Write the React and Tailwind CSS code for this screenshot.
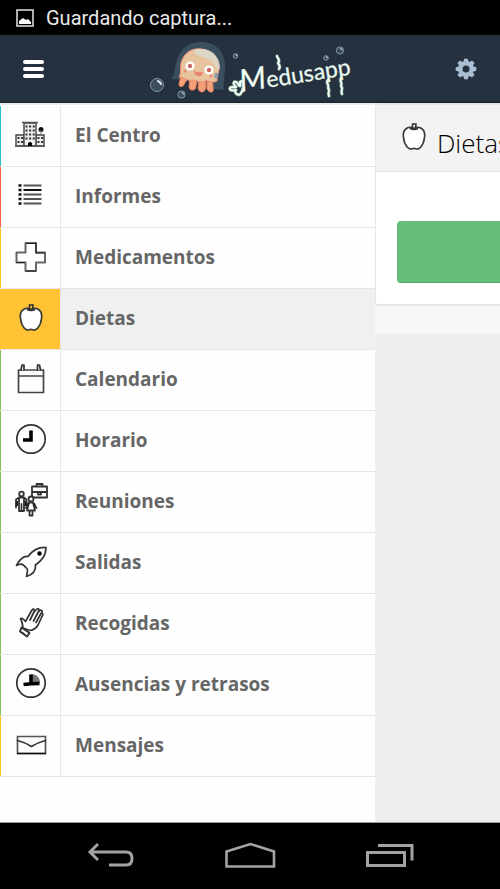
import React from "react";

const ink = { fill: "none", stroke: "#333", strokeWidth: 1.7, strokeLinejoin: "round", strokeLinecap: "round" };

function Icon({ children }) {
  return (
    <svg viewBox="1 0 60 60" className="block h-[60px] w-[60px]" aria-hidden="true">
      {children}
    </svg>
  );
}

const Building = () => (
  <Icon>
    <g fill="#eee" stroke="#444" strokeWidth="1.4">
      <path d="M16 29h8v11h-8zM36 29h8v11h-8z" />
      <path d="M24 17h12v23H24z" />
    </g>
    <path d="M22 16.500h16M15 40h30" stroke="#555" strokeWidth="1.600" />
    <path
      d="M25.500 20.500h10M25.500 24.500h10M25.500 28.500h10M25.500 32.500h10M17.500 32h6M17.500 36h6M37.500 32h6M37.500 36h6"
      stroke="#333"
      strokeWidth="2"
      strokeDasharray="2 1.6"
    />
    <circle cx="41" cy="23.500" r="2.500" fill="#111" />
    <path d="M41 24v6" stroke="#777" />
    <path d="M28 40v-3q2-2 4 0v3z" fill="#000" />
  </Icon>
);

const ListIcon = () => (
  <Icon>
    <g stroke="#555" strokeWidth="2">
      <path d="M23.500 18.500h18M23.500 27.500h18M23.500 32h18M23.500 36.500h18" />
      <path d="M23.500 23h18" stroke="#111" />
    </g>
    <path d="M18.500 18.500h3M18.500 23h3M18.500 27.500h3M18.500 32h3M18.500 36.500h3" stroke="#111" strokeWidth="2.400" />
  </Icon>
);

const Cross = () => (
  <Icon>
    <path d="M25.500 15h10.500v9.500h9v10h-9V43H25.500v-8.500h-9v-10h9z" {...ink} stroke="#666" strokeWidth="2" />
    <path d="M26 15.500h10v9.500H45M26 43h10M16.500 34.500h8.500" fill="none" stroke="#222" strokeWidth="1.200" />
  </Icon>
);

const Apple = () => (
  <Icon>
    <path
      d="M31 20.500c-3-1.500-6-1.500-8.200.500-2.500 2-2.800 5-2.300 8.500.400 3.500 1.500 7 3.700 9.500 1.800 2 3.500 2.500 5 1.800q1.800-.800 3.600 0c1.500.700 3.200.200 5-1.800 2.200-2.500 3.300-6 3.700-9.500.500-3.500.200-6.500-2.300-8.500-2.200-2-5.200-2-8.200-.500z"
      fill="#fff"
      stroke="#3a3a3a"
      strokeWidth="1.700"
    />
    <path d="M29.500 20.500v-4.500h3.500l-.500 4.500M27 20.500q4 2 8 0" fill="none" stroke="#333" strokeWidth="1.600" />
  </Icon>
);

const Calendar = () => (
  <Icon>
    <path d="M18.500 20h25v22.500h-25zM18.500 26h25" {...ink} stroke="#444" />
    <path d="M21 20l1-5h2v5M37.500 20v-5h2l1 5" {...ink} fill="#fff" />
  </Icon>
);

const Clock = () => (
  <Icon>
    <circle cx="31" cy="28" r="14.200" {...ink} />
    <path d="M31 19.500v9.500h-8" fill="none" stroke="#000" strokeWidth="3.600" />
  </Icon>
);

const Meeting = () => (
  <Icon>
    <g {...ink} strokeWidth="1.800">
      <path d="M32 14.500h15v11h-15zM32 20h15M36.500 14.500v-2.500h6v2.500M38 20v2.500h3V20" fill="#fff" />
      <circle cx="21.500" cy="22" r="2.300" />
      <path d="M19 25.500h5l2.500 2v6M19 25.500l-3 2v8M19 27v12h5V27M21.500 32v7" />
      <circle cx="31" cy="27" r="2.500" fill="#fff" />
      <path d="M29 30.500l-3 5.500M33 30.500l3.500 5.500M29 30.500l-2 8h8l-2-8zM29.500 39v4.500h3V39" fill="#fff" />
    </g>
    <path d="M17 29v5M25.500 29v5M27 34l1-3M35 34l-1-3" stroke="#222" strokeWidth="2" />
  </Icon>
);

const Rocket = () => (
  <Icon>
    <path d="M46 14.500c-8-.500-13.500 3-18 9-4-.500-8 2-11.500 9 3.500-2 6-2 8 .500 1.500 2.500 3.500 2 3 5-.500 2-.500 3.500-1 5.500 6.500-2 9.500-6 9-11.500 6-4.500 10.500-9 10.500-17.500z" {...ink} />
    <circle cx="39.500" cy="20.500" r="2.200" fill="#000" />
  </Icon>
);

const Hand = () => (
  <Icon>
    <path d="M23 34c-.500-4-.500-6-2.500-9.500 2.500-1 3 1 5 3L32 16c2-2 3 0 2 2l3-3c2-1 2.500 1 1.500 2.500l2-1.500c2 0 2 1.500 1 3 2 0 1.500 2 .500 3.500l-4 8.500c-2 3.500-4 5-8 5.500z" {...ink} fill="#fff" />
    <path d="M34 18l-4 8M38.500 17.500l-5 9.500M41 19.500l-5 9" {...ink} />
    <path d="M21.500 33.500l8 5.500-2.500 3.500-7-5z" {...ink} strokeWidth="2" fill="#fff" />
    <path d="M22 38l3 2" stroke="#333" />
  </Icon>
);

const Absence = () => (
  <Icon>
    <circle cx="31" cy="28" r="14.200" {...ink} />
    <path d="M31 28v-9c6 0 9 4 9 9z" fill="#777" />
    <path d="M31 19.500v9M23.500 29.500q8-1 16-1" fill="none" stroke="#000" strokeWidth="3.600" />
  </Icon>
);

const Mail = () => (
  <Icon>
    <path d="M17.500 20.500h28v17H17.500z" {...ink} stroke="#555" strokeLinejoin="miter" />
    <path d="M17.500 24.500q8 2 14 6 6-4 14-6" {...ink} />
    <path d="M17 37.500h29" stroke="#111" strokeWidth="1.500" />
  </Icon>
);

const items = [
  { label: "El Centro", icon: Building, edge: "border-[#25c1c9]" },
  { label: "Informes", icon: ListIcon, edge: "border-[#ff5b45]" },
  { label: "Medicamentos", icon: Cross, edge: "border-[#ffc20e]" },
  { label: "Dietas", icon: Apple, edge: "border-[#ffc333]", active: true },
  { label: "Calendario", icon: Calendar, edge: "border-[#80c255]" },
  { label: "Horario", icon: Clock, edge: "border-[#80c255]" },
  { label: "Reuniones", icon: Meeting, edge: "border-[#80c255]" },
  { label: "Salidas", icon: Rocket, edge: "border-[#80c255]" },
  { label: "Recogidas", icon: Hand, edge: "border-[#80c255]" },
  { label: "Ausencias y retrasos", icon: Absence, edge: "border-[#80c255]" },
  { label: "Mensajes", icon: Mail, edge: "border-[#ffc20e]" },
];

function Bubble({ x, y, r }) {
  return (
    <g>
      <circle cx={x} cy={y} r={r} fill="#3a4d5b" stroke="#8497a2" strokeWidth="1" />
      <path d={`M${x} ${y - r * 0.6}Q${x + r * 0.6} ${y - r * 0.5} ${x + r * 0.6} ${y}`} fill="none" stroke="#dce5e9" strokeWidth={r > 4 ? 2 : 1} />
    </g>
  );
}

function Seaweed({ d }) {
  return (
    <>
      <path d={d} fill="none" stroke="#6f9c87" strokeWidth="3.400" strokeLinecap="round" strokeLinejoin="round" />
      <path d={d} fill="none" stroke="#f4fff8" strokeWidth="2" strokeLinecap="round" strokeLinejoin="round" />
    </>
  );
}

function Logo() {
  return (
    <svg viewBox="0 0 220 66" className="h-[66px] w-[220px]" role="img" aria-label="Medusapp">
      <Bubble x={17} y={49} r={6.5} />
      <Bubble x={41.5} y={58.5} r={3.6} />
      <Bubble x={95.5} y={20} r={2.3} />
      <Bubble x={186} y={22} r={2.3} />
      <Bubble x={200} y={14.5} r={3.6} />
      <path d="M31 43c4-5 3-10 6-19C40 13 49 6 60 6c14 0 24 7 25 23 0 10-2 16-1 25-8 0-15-3-23-5-9-2-19-6-30-6z" fill="#3a4f5d" />
      <path d="M41 40l-2 8q0 4 4 2l5-8zM50 42l-1 9q1 4 4 3 3 0 3-4l1-7zM59 43l-1 9q1 4 4 4t4-5l-1-8zM67 43v10q2 4 5 3 2-1 1-5l-1-9z" fill="#f4a078" stroke="#ef7f62" />
      <path d="M39 41c3-5 0-10 3-17 4-9 11-12 19-11 12 1 18 9 18 19 0 5-2 7-2 13-5 3-8-1-12 0-5 3-8-1-12-1-5 2-8-3-14-3z" fill="#e8c49e" stroke="#f08a70" />
      <path d="M56 13c13-2 23 5 24 18 0 3-2 4-4 1-2-7-8-10-17-12-6-2-7-6-3-7z" fill="#d8dbd0" opacity=".8" />
      <circle cx="50" cy="30" r="4.600" fill="#fff" />
      <circle cx="69" cy="34" r="4.600" fill="#fff" />
      <circle cx="50" cy="30" r="2.200" fill="#c86a5f" />
      <circle cx="69" cy="34" r="2.200" fill="#c86a5f" />
      <path d="M54 35q5 2 9 1-1 5-5 4-4-1-4-5z" fill="#e98270" />
      <circle cx="45" cy="35" r="1.500" fill="#f08a78" />
      <circle cx="71" cy="40" r="1.500" fill="#f08a78" />
      <path d="M75 37q4-1 3 4-2 3-4 0z" fill="#8a9da8" />
      <Seaweed d="M103 52c-1 6-4 8-6 6-2 0-2-3-1-4-4 1-7 0-6-2 1-2 4 0 6-1-4-4-2-6 0-5 2 0 2 4 4 4v-4c2-2 3 1 3 3" />
      <Seaweed d="M139 33c2-3 0-4-1-6 3-3-1-5-1-7" />
      <Seaweed d="M188 44c-3 3 2 5 0 8 3 3-1 4 1 8" />
      <Seaweed d="M201 42c-2 3 2 5 0 8 3 3-1 4 1 8" />
      <text
        x="101"
        y="56"
        transform="rotate(-9 101 56)"
        fontFamily="Lato, sans-serif"
        fontSize="23"
        fill="#f4fff8"
        stroke="#c5dfd0"
        strokeWidth="0.400"
      >
        <tspan fontSize="31" fontStyle="italic">M</tspan>
        <tspan>edusapp</tspan>
      </text>
    </svg>
  );
}

function Gear() {
  return (
    <svg viewBox="0 0 22 22" className="h-[22px] w-[22px]" aria-hidden="true">
      <g fill="#a9bdd3">
        <circle cx="11" cy="11" r="8" />
        <path d="M8.500 4l.700-3.300h3.600l.700 3.300zM8.500 18l.700 3.300h3.600l.700-3.300zM4 8.500l-3.300.700v3.600l3.300.7zM18 8.500l3.300.700v3.600l-3.300.7z" />
        <path d="M8.500 4l.700-3.300h3.600l.700 3.300zM8.500 18l.700 3.300h3.600l.700-3.300zM4 8.500l-3.300.700v3.600l3.300.7zM18 8.500l3.300.700v3.600l-3.300.7z" transform="rotate(45 11 11)" />
      </g>
      <circle cx="11" cy="11" r="3.500" fill="#263140" />
    </svg>
  );
}

const navStroke = { fill: "none", stroke: "#a3a3a3", strokeWidth: 3 };

export default function App() {
  return (
    <div className="flex min-h-screen flex-col overflow-hidden bg-black font-['Open_Sans',sans-serif]">
      <div className="flex h-[35px] items-center gap-3 bg-black pl-4 font-[Roboto,sans-serif] text-xl text-[#e8e8e8]">
        <svg viewBox="0 0 18 18" className="h-[18px] w-[18px]" aria-hidden="true">
          <path d="M1 1h16v16H1z" fill="none" stroke="#e5e5e5" strokeWidth="1.500" />
          <path d="M3 15v-3l4-3 3 2 2-1 3 3v2z" fill="#fff" />
        </svg>
        <span>Guardando captura...</span>
      </div>

      <header className="flex h-[68px] items-center justify-between border-b border-[#192330] bg-[#263140] px-[23px]">
        <button type="button" aria-label="Menú" className="flex w-[21px] flex-col gap-[3px]">
          <span className="h-1 w-full rounded-xs bg-white" />
          <span className="h-1 w-full rounded-xs bg-white" />
          <span className="h-1 w-full rounded-xs bg-white" />
        </button>
        <Logo />
        <button type="button" aria-label="Ajustes">
          <Gear />
        </button>
      </header>

      <main className="flex flex-1 overflow-hidden border-b border-[#999] bg-[#efefef]">
        <nav className="w-3/4 shrink-0 border-t-2 border-[#ececec] bg-[#fefefe] pt-px">
          <ul>
            {items.map(({ label, icon: Glyph, edge, active }) => (
              <li key={label}>
                <a href="#" className={`flex h-[61px] border-b border-[#e6e6e6] ${active ? "bg-[#f0f0f0]" : ""}`}>
                  <span className={`w-[61px] shrink-0 border-r border-[#e6e6e6] ${active ? "bg-[#ffc333]" : ""}`}>
                    <span className={`block w-[60px] border-l ${edge}`}>
                      <Glyph />
                    </span>
                  </span>
                  <span className="flex items-center pb-px pl-[14px] text-[19px] font-bold text-[#666]">{label}</span>
                </a>
              </li>
            ))}
          </ul>
        </nav>

        <section className="w-full shrink-0">
          <div className="bg-[#f7f7f7] pb-7">
            <div className="rounded-sm border-y-2 border-l border-[#e6e6e6] bg-white">
              <h1 className="flex h-[67px] items-center border-b border-[#e3e3e3] bg-[#f3f3f3] pl-2 text-[26px] font-light text-black">
                <span className="-mr-[7px]">
                  <Apple />
                </span>
                <span className="pt-[10px]">Dietas</span>
              </h1>
              <div className="px-[21px] pt-[49px] pb-[21px]">
                <button type="button" aria-label="Añadir dieta" className="block h-[62px] w-full rounded-sm border-b border-[#4fae65] bg-[#67bd7a]" />
              </div>
            </div>
          </div>
        </section>
      </main>

      <footer className="flex h-[66px] items-center justify-between bg-black px-[86px]">
        <button type="button" aria-label="Atrás">
          <svg viewBox="0 0 50 30" className="h-[30px] w-[50px]">
            <path d="M4 11h36q6 0 6 6.500t-6 6.500H23M12 3l-8 8 8 8" {...navStroke} />
          </svg>
        </button>
        <button type="button" aria-label="Inicio">
          <svg viewBox="0 0 52 30" className="h-[30px] w-[52px]">
            <path d="M2.500 25.500v-15L26.500 3l23.500 7.500v15z" {...navStroke} strokeWidth="2.600" />
          </svg>
        </button>
        <button type="button" aria-label="Recientes">
          <svg viewBox="0 0 50 30" className="h-[30px] w-[50px]">
            <path d="M3.500 11.500h37v13h-37zM14 4.500h34v15" {...navStroke} />
          </svg>
        </button>
      </footer>
    </div>
  );
}
